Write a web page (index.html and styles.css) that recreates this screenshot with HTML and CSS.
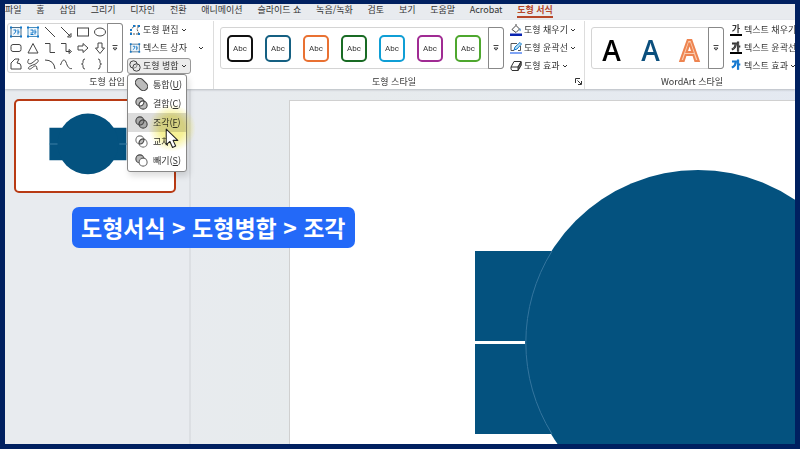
FILE: index.html
```html
<!DOCTYPE html>
<html lang="ko">
<head>
<meta charset="utf-8">
<title>도형 서식</title>
<link rel="stylesheet" href="styles.css">
</head>
<body>
<svg class="defs" aria-hidden="true">
  <symbol id="chev" viewBox="0 0 6 6"><path d="M1 2l2 2 2-2" fill="none" stroke="#333"/></symbol>
  <symbol id="more" viewBox="0 0 8 8"><path d="M1.500 1.500h5M2 4h4L4 6.200z" fill="none" stroke="#444"/></symbol>
  <symbol id="textbox" viewBox="0 0 14 14"><rect x="2" y="2.500" width="10" height="9" fill="#eef6fc" stroke="#4a6f8c"/><g fill="#1478c8"><rect x="1" y="1.500" width="2" height="2"/><rect x="11" y="1.500" width="2" height="2"/><rect x="1" y="10.500" width="2" height="2"/><rect x="11" y="10.500" width="2" height="2"/></g><path d="M4.500 5h2.500q0 3-2.500 4M9 4.500v5M9 7h1.500" fill="none" stroke="#1478c8"/></symbol>
  <symbol id="vtextbox" viewBox="0 0 14 14"><rect x="2" y="2.500" width="10" height="9" fill="#eef6fc" stroke="#4a8fc0"/><g fill="#1478c8"><rect x="1" y="1.500" width="2" height="2"/><rect x="11" y="1.500" width="2" height="2"/><rect x="1" y="10.500" width="2" height="2"/><rect x="11" y="10.500" width="2" height="2"/></g><path d="M4.500 5h2.500v3h-2.500M9 4.500v5M4.500 9.500h3M9 7h1.500" fill="none" stroke="#1478c8"/></symbol>
  <symbol id="merge" viewBox="0 0 12 12"><circle cx="4.500" cy="4.500" r="3.700"/><circle cx="7.500" cy="7.500" r="3.700"/></symbol>
</svg>
<div class="app">
  <nav class="tabs">
    <a href="#">파일</a><a href="#">홈</a><a href="#">삽입</a><a href="#">그리기</a><a href="#">디자인</a><a href="#">전환</a><a href="#">애니메이션</a><a href="#">슬라이드 쇼</a><a href="#">녹음/녹화</a><a href="#">검토</a><a href="#">보기</a><a href="#">도움말</a><a href="#">Acrobat</a><a href="#" class="active">도형 서식</a>
  </nav>

  <header class="ribbon">
    <section class="group insert">
      <div class="tools">
        <div class="gallery tall">
          <div class="shapes">
            <button aria-label="텍스트 상자"><svg><use href="#textbox"/></svg></button>
            <button aria-label="세로 텍스트 상자"><svg><use href="#vtextbox"/></svg></button>
            <button aria-label="선"><svg><path d="M2 2l10 10"/></svg></button>
            <button aria-label="화살표"><svg><path d="M2 2l9 9M12 8.500v3.500H8.500z"/></svg></button>
            <button aria-label="직사각형"><svg><rect x="1.500" y="3" width="11" height="8"/></svg></button>
            <button aria-label="타원"><svg><ellipse cx="7" cy="7" rx="5.500" ry="4"/></svg></button>
            <button aria-label="둥근 직사각형"><svg><rect x="2" y="3.500" width="10" height="7" rx="2"/></svg></button>
            <button aria-label="삼각형"><svg><path d="M7 2.500l5 9.500H2z"/></svg></button>
            <button aria-label="꺾인 연결선"><svg><path d="M2 2.500h5v9h5"/></svg></button>
            <button aria-label="꺾인 화살표"><svg><path d="M2 2.500h5v8h4M10 8.500l2.500 2-2.500 2z"/></svg></button>
            <button aria-label="오른쪽 화살표"><svg><path d="M2 5h5V2.500L12 7l-5 4.500V9H2z"/></svg></button>
            <button aria-label="아래쪽 화살표"><svg><path d="M5 2h4v5h2.500L7 12.500 2.500 7H5z"/></svg></button>
            <button aria-label="자유형 도형"><svg><path d="M2 12V6l4-4h4L8 6q4 0 4 3v3z"/></svg></button>
            <button aria-label="자유 곡선"><svg><path d="M3 2C0 6 3 8 6 6s5-5 6-3-2 4-5 5-6 3-4 4 5-4 7-3-1 4 2 3"/></svg></button>
            <button aria-label="호"><svg><path d="M2 3q9 0 10 9"/></svg></button>
            <button aria-label="곡선"><svg><path d="M1.500 8C4 1 6 2 7.500 6.500S11 12 13 11.500"/></svg></button>
            <button aria-label="왼쪽 중괄호"><svg><path d="M9 2Q7 2 7 4v1.500Q7 7 5.500 7 7 7 7 8.500V10q0 2 2 2"/></svg></button>
            <button aria-label="오른쪽 중괄호"><svg><path d="M5 2q2 0 2 2v1.500Q7 7 8.500 7 7 7 7 8.500V10q0 2-2 2"/></svg></button>
          </div>
          <button class="more" aria-label="자세히"><svg><use href="#more"/></svg></button>
        </div>
        <div class="commands">
          <button class="command"><svg class="icon" viewBox="0 0 12 12"><path d="M2 10V6l3-4h5L8 5l2 5z" fill="none" stroke="#555" stroke-dasharray="2 1"/><g fill="#1478c8"><rect x="1" y="9" width="2" height="2"/><rect x="9" y="9" width="2" height="2"/><rect x="9" y="1" width="2" height="2"/><rect x="4" y="1" width="2" height="2"/><rect x="1" y="5" width="2" height="2"/></g></svg>도형 편집<svg class="chev"><use href="#chev"/></svg></button>
          <div class="split"><button class="command"><svg class="icon"><use href="#textbox"/></svg>텍스트 상자</button><button class="command" aria-label="텍스트 상자 옵션"><svg class="chev"><use href="#chev"/></svg></button></div>
          <div class="merge">
            <button class="command pressed" aria-expanded="true"><svg class="icon rings"><use href="#merge"/></svg>도형 병합<svg class="chev"><use href="#chev"/></svg></button>
            <div class="menu">
              <button><svg viewBox="0 0 12 12"><path d="M1.500 7A3.700 3.700 0 0 1 7 1.500L10.500 5A3.700 3.700 0 0 1 5 10.500z" fill="#bbb" stroke="#444"/></svg><span>통합(<u>U</u>)</span></button>
              <button><svg viewBox="0 0 12 12"><g fill="#bbb" stroke="#444"><circle cx="4.500" cy="4.500" r="3.700"/><circle cx="7.500" cy="7.500" r="3.700"/></g><path d="M8.200 3.800a3.700 3.700 0 0 1-4.400 4.400 3.700 3.700 0 0 1 4.400-4.400z" fill="#fff" stroke="#444"/></svg><span>결합(<u>C</u>)</span></button>
              <button class="hover"><svg viewBox="0 0 12 12"><g fill="#aaa" stroke="#444"><circle cx="4.500" cy="4.500" r="3.700"/><circle cx="7.500" cy="7.500" r="3.700"/></g><path d="M8.200 3.800a3.700 3.700 0 0 1-4.400 4.400 3.700 3.700 0 0 1 4.400-4.400z" fill="#999" stroke="#444"/></svg><span>조각(<u>F</u>)</span></button>
              <button><svg viewBox="0 0 12 12"><g fill="#fff" stroke="#777"><circle cx="4.500" cy="4.500" r="3.700"/><circle cx="7.500" cy="7.500" r="3.700"/></g><path d="M8.200 3.800a3.700 3.700 0 0 1-4.400 4.400 3.700 3.700 0 0 1 4.400-4.400z" fill="#bbb" stroke="#444"/></svg><span>교차</span></button>
              <button><svg viewBox="0 0 12 12"><circle cx="4.500" cy="4.500" r="3.700" fill="#bbb" stroke="#444"/><circle cx="7.500" cy="7.500" r="3.700" fill="#fff" stroke="#666"/></svg><span>빼기(<u>S</u>)</span></button>
              <div class="glow"></div>
              <svg class="pointer" viewBox="0 0 13 20"><path d="M1 1v15l3.500-3.200L7 18.500l3-1.300-2.500-5.400H12z" fill="#fff" stroke="#222" stroke-linejoin="round"/></svg>
            </div>
          </div>
        </div>
      </div>
      <h2>도형 삽입</h2>
    </section>

    <section class="group styles">
      <div class="tools">
        <div class="gallery">
          <div class="tiles">
            <button class="black">Abc</button><button class="teal">Abc</button><button class="orange">Abc</button><button class="green">Abc</button><button class="sky">Abc</button><button class="purple">Abc</button><button class="lime">Abc</button>
          </div>
          <button class="more" aria-label="자세히"><svg><use href="#more"/></svg></button>
        </div>
        <div class="commands">
          <button class="command"><svg class="icon" viewBox="0 0 12 12"><path d="M2 5.500L6 1.500l3.500 3.500L6 8.500zM6 1.500V0" fill="none" stroke="#444"/><path d="M10 4q1.500 2 0 3.500Q9 6 10 4z" fill="#1478c8"/><path d="M0 9.500h12V12H0z" fill="#0a24b0"/></svg>도형 채우기<svg class="chev"><use href="#chev"/></svg></button>
          <button class="command"><svg class="icon" viewBox="0 0 12 12"><path d="M7 1.500H1v7h3M10.500 4v4.500H8" fill="none" stroke="#555"/><path d="M4 8l1-3 5-4.500 1.500 1.500-4.500 5z" fill="#b9e1f5" stroke="#1478c8"/><path d="M0 10h12v2H0z" fill="#7fa4f5"/></svg>도형 윤곽선<svg class="chev"><use href="#chev"/></svg></button>
          <button class="command"><svg class="icon" viewBox="0 0 12 12"><path d="M1 7l3-5.500h7L8 7zM1 7v2l1 1.500h6L11 5V1.500" fill="#fff" stroke="#333"/><path d="M8 7l3-5v3.500l-3 5z" fill="#777" stroke="#333"/></svg>도형 효과<svg class="chev"><use href="#chev"/></svg></button>
        </div>
      </div>
      <h2>도형 스타일</h2>
      <button class="launcher" aria-label="도형 서식 대화 상자"><svg viewBox="0 0 7 7"><path d="M.5 5V.5H5M2.500 2.500l3.500 3.500M6.500 3v3.500H3" fill="none" stroke="#333"/></svg></button>
    </section>

    <section class="group wordart">
      <div class="tools">
        <div class="gallery">
          <div class="letters"><button class="ink">A</button><button class="navy">A</button><button class="outline">A</button></div>
          <button class="more" aria-label="자세히"><svg><use href="#more"/></svg></button>
        </div>
        <div class="commands">
          <button class="command"><span class="glyph solid">가</span>텍스트 채우기</button>
          <button class="command"><span class="glyph hollow">가</span>텍스트 윤곽선</button>
          <button class="command"><span class="glyph blue">가</span>텍스트 효과<svg class="chev"><use href="#chev"/></svg></button>
        </div>
      </div>
      <h2>WordArt 스타일</h2>
    </section>
  </header>

  <main class="workspace">
    <aside class="thumbs">
      <button class="thumb" aria-label="슬라이드 1"><svg viewBox="0 0 156 88"><g fill="#04527f"><path d="M33 26h76v32H33z"/><circle cx="71" cy="42" r="30"/></g><path d="M33 42h8M102 42h8" stroke="#3d7fa5" /></svg></button>
    </aside>
    <div class="canvas">
      <div class="slide">
        <svg width="816" height="459" viewBox="0 0 816 459"><path d="M185 150h446v90H185zM185 243h446v90H185z" fill="#04527f"/><circle cx="408" cy="242" r="173" fill="#04527f"/><path d="M262 150A173 173 0 0 0 262 333" fill="none" stroke="#34759e"/></svg>
      </div>
    </div>
  </main>
  <p class="caption">도형서식 &gt; 도형병합 &gt; 조각</p>
</div>
</body>
</html>
```
FILE: styles.css
```css
* { box-sizing: border-box; }
body {
  margin: 0;
  font-family: "Noto Sans CJK KR", sans-serif;
  font-size: 9px;
  line-height: 12px;
  color: #333;
}
.defs { position: absolute; width: 0; height: 0; }
button {
  margin: 0; padding: 0; border: 0;
  background: none; font: inherit; color: inherit;
}
svg { display: block; flex: none; }

.app {
  position: relative;
  display: flex;
  flex-direction: column;
  height: 100vh;
  border: 5px solid #002060;
  border-top-width: 4px;
  overflow: hidden;
  background: #e8ebef;
}

.tabs {
  display: flex;
  flex: none;
  justify-content: space-between;
  width: 70%;
  height: 16px;
  padding-right: 5px;
}
.tabs a { color: #333; text-decoration: none; white-space: nowrap; }
.tabs .active { height: 14px; border-bottom: 2px solid #b7472a; color: #b7472a; font-weight: 700; }

.ribbon {
  position: relative;
  z-index: 1;
  display: flex;
  flex: none;
  padding-top: 1px;
  background: #fff;
  box-shadow: 0 1px 2px #b8bcc2;
}
.group { position: relative; flex: none; border-right: 1px solid #ddd; padding: 0 6px; }
.insert { padding-left: 2px; width: 209px; }
.styles { width: 371px; }
.wordart { width: 218px; border: 0; padding-right: 0; }
.group h2 { margin: 0; font-size: 9px; line-height: 14px; font-weight: 400; text-align: center; }
.styles h2, .wordart h2 { padding-right: 10px; }
.tools { display: flex; align-items: center; height: 54px; gap: 4px; }

.gallery { display: flex; height: 42px; border: 1px solid #d4d4d4; border-radius: 3px; }
.gallery.tall { height: 50px; }
.more {
  display: grid;
  place-items: center;
  width: 16px;
  margin: -1px;
  border: 1px solid #888;
  border-radius: 0 3px 3px 0;
}
.more svg { width: 8px; height: 8px; }

.shapes { display: grid; grid-template-columns: repeat(6, 1fr); width: 100px; }
.shapes button { display: grid; place-items: center; }
.shapes svg { width: 14px; height: 14px; fill: none; stroke: #444; }
.shapes use { stroke: none; }

.commands { display: flex; flex-direction: column; align-items: flex-start; gap: 2px; }
.command { display: flex; align-items: center; gap: 2px; height: 16px; padding: 0 1px; white-space: nowrap; border: 1px solid transparent; }
.icon { width: 12px; height: 12px; }
.chev { width: 6px; height: 6px; }
.split { display: flex; gap: 7px; }
.rings { fill: #ddd; fill-opacity: .5; stroke: #444; }
.pressed { padding-right: 3px; border-color: #999; border-radius: 3px; background: #ececec; }

.merge { position: relative; }
.menu {
  position: absolute;
  top: 16px;
  left: 0;
  width: 60px;
  height: 98px;
  border: 1px solid #888;
  border-radius: 3px;
  background: #fff;
  box-shadow: 2px 4px 6px #0002;
}
.menu button { display: flex; align-items: center; gap: 5px; width: 100%; height: 19px; padding-left: 7px; white-space: nowrap; }
.menu button svg { width: 13px; height: 13px; }
.menu .hover { background: #dcdcdc; }
.glow {
  position: absolute;
  top: 29px; left: 20px;
  width: 48px; height: 48px;
  border-radius: 50%;
  background: radial-gradient(circle, #f0e85099 35%, #f0e85000 70%);
  mix-blend-mode: multiply;
}
.pointer { position: absolute; top: 53px; left: 37px; width: 14px; height: 21px; }

.tiles { display: flex; align-items: center; gap: 12px; padding: 0 8px 0 6px; }
.tiles button { width: 26px; height: 27px; border: 2px solid; border-radius: 5px; font: 8px Roboto, sans-serif; }
.tiles .black { border-color: #111; }
.tiles .teal { border-color: #156082; }
.tiles .orange { border-color: #e97132; }
.tiles .green { border-color: #196b24; }
.tiles .sky { border-color: #0f9ed5; }
.tiles .purple { border-color: #a02b93; }
.tiles .lime { border-color: #4ea72e; }
.launcher { position: absolute; right: 2px; bottom: 4px; }
.launcher svg { width: 7px; height: 7px; }

.letters { display: grid; grid-template-columns: repeat(3, 39px); padding-top: 4px; }
.letters button { font: 600 28px/36px "Open Sans", sans-serif; }
.letters .ink { color: #000; }
.letters .navy { color: #0b4f7d; }
.letters .outline { color: #f9cdb0; -webkit-text-stroke: 2px #ee8450; }
.glyph { width: 12px; height: 12px; text-align: center; line-height: 10px; font-weight: 700; }
.solid, .hollow { border-bottom: 2px solid #000; }
.hollow { color: #fff; -webkit-text-stroke: 1px #333; }
.blue { color: #1478d0; -webkit-text-stroke: 1px #1478d0; }

.workspace { display: flex; flex: 1; min-height: 0; }
.thumbs { flex: none; width: 186px; padding: 10px 0 0 9px; border-right: 2px solid #dcdfe3; }
.thumb { width: 162px; height: 94px; border: 2px solid #b83a14; border-radius: 5px; background: #fff; overflow: hidden; }
.thumb svg { width: 100%; height: 100%; }
.canvas { display: flex; flex: 1; min-width: 0; padding: 11px 0 0 98px; background: linear-gradient(100deg, #e8ebef, #e7ebed 25%, #e4e9f2); }
.slide { flex: 1; overflow: hidden; border: 1px solid #d0d0d0; border-width: 1px 0 0 1px; background: #fff; }

.caption {
  position: absolute;
  z-index: 2;
  top: 203px;
  left: 67px;
  margin: 0;
  padding: 0 9px;
  border-radius: 7px;
  background: #2369f8;
  color: #fff;
  font-size: 23px;
  font-weight: 700;
  line-height: 41px;
  white-space: nowrap;
}
```
